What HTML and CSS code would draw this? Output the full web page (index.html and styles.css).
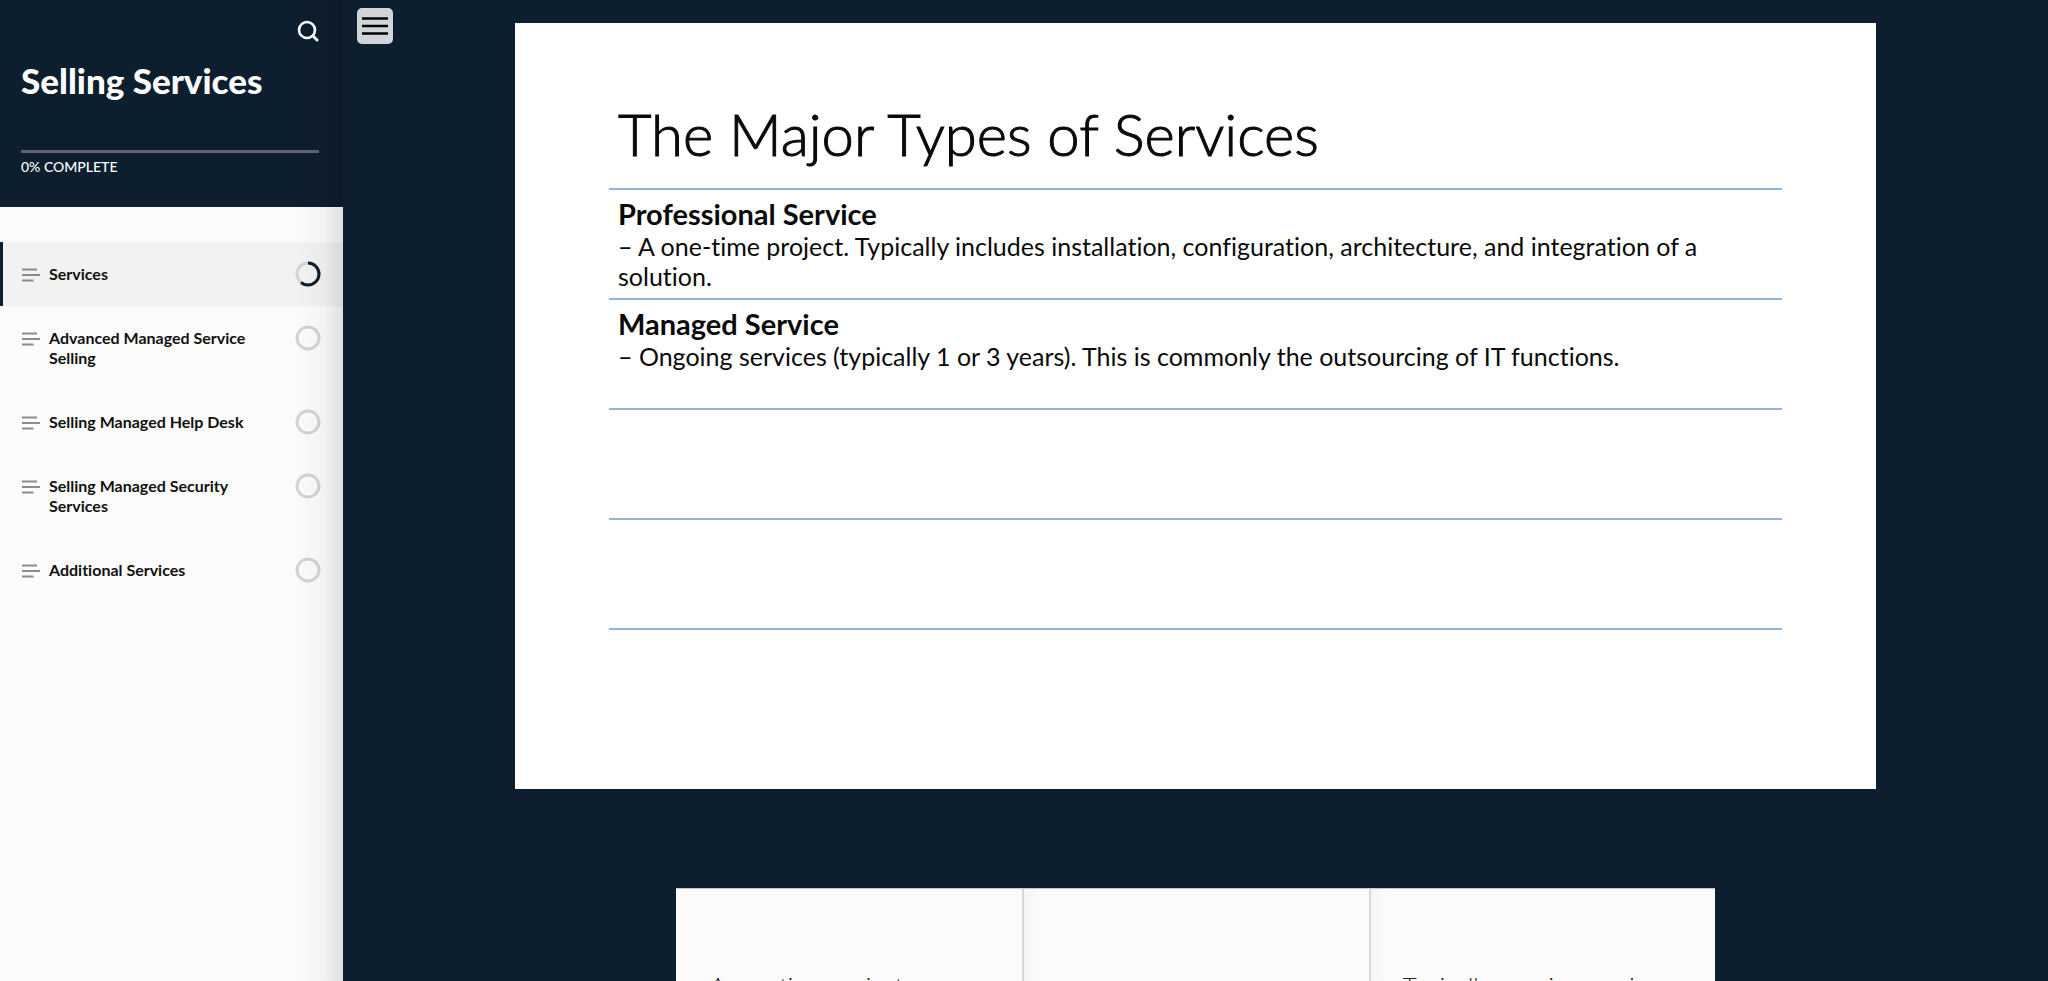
FILE: index.html
```html
<!DOCTYPE html>
<html lang="en">
<head>
    <meta charset="UTF-8">
    <meta name="viewport" content="width=device-width, initial-scale=1.0">
    <title>Selling Services</title>
    <link rel="stylesheet" href="styles.css">
</head>
<body>
    <aside class="sidebar">
        <header class="sidebar-header">
            <button class="search-btn" aria-label="Search">
                <svg width="22" height="22" viewBox="0 0 22 22" fill="none" stroke="#fff" stroke-width="3" stroke-linecap="round">
                    <circle cx="10" cy="10" r="8" stroke-width="2.6"/>
                    <path d="M16 16l4 4"/>
                </svg>
            </button>
            <h1>Selling Services</h1>
            <div class="progress-bar"></div>
            <div class="progress-text">0% COMPLETE</div>
        </header>

        <nav class="lessons">
            <a href="#" class="lesson active">
                <svg class="lines" viewBox="0 0 18 14"><path d="M0 1.5h15M0 7h18M0 12.500h11.500"/></svg>
                <span>Services</span>
                <svg class="ring" viewBox="0 0 26 26">
                    <circle cx="13" cy="13" r="11"/>
                    <circle class="ring-done" cx="13" cy="13" r="11" pathLength="100" stroke-dasharray="61 100" transform="rotate(-90 13 13)"/>
                </svg>
            </a>
            <a href="#" class="lesson">
                <svg class="lines" viewBox="0 0 18 14"><path d="M0 1.5h15M0 7h18M0 12.500h11.500"/></svg>
                <span>Advanced Managed Service Selling</span>
                <svg class="ring" viewBox="0 0 26 26"><circle cx="13" cy="13" r="11"/></svg>
            </a>
            <a href="#" class="lesson">
                <svg class="lines" viewBox="0 0 18 14"><path d="M0 1.5h15M0 7h18M0 12.500h11.500"/></svg>
                <span>Selling Managed Help Desk</span>
                <svg class="ring" viewBox="0 0 26 26"><circle cx="13" cy="13" r="11"/></svg>
            </a>
            <a href="#" class="lesson">
                <svg class="lines" viewBox="0 0 18 14"><path d="M0 1.5h15M0 7h18M0 12.500h11.500"/></svg>
                <span>Selling Managed Security Services</span>
                <svg class="ring" viewBox="0 0 26 26"><circle cx="13" cy="13" r="11"/></svg>
            </a>
            <a href="#" class="lesson">
                <svg class="lines" viewBox="0 0 18 14"><path d="M0 1.5h15M0 7h18M0 12.500h11.500"/></svg>
                <span>Additional Services</span>
                <svg class="ring" viewBox="0 0 26 26"><circle cx="13" cy="13" r="11"/></svg>
            </a>
        </nav>
    </aside>

    <main class="content">
        <button class="menu-btn" aria-label="Toggle menu">
            <svg width="26" height="20" viewBox="0 0 26 20" stroke="#000" stroke-width="2.6">
                <path d="M0 2.500h26M0 10h26M0 17.500h26"/>
            </svg>
        </button>

        <section class="slide">
            <h2>The Major Types of Services</h2>
            <div class="row">
                <h3>Professional Service</h3>
                <p>– A one-time project. Typically includes installation, configuration, architecture, and integration of a solution.</p>
            </div>
            <div class="row">
                <h3>Managed Service</h3>
                <p>– Ongoing services (typically 1 or 3 years). This is commonly the outsourcing of IT functions.</p>
            </div>
            <div class="row"></div>
            <div class="row"></div>
            <div class="row last"></div>
        </section>

        <section class="cards">
            <div class="card">A one-time project</div>
            <div class="card"></div>
            <div class="card">Typically ongoing services</div>
        </section>
    </main>
</body>
</html>
```
FILE: styles.css
```css
* {
    box-sizing: border-box;
}
body {
    margin: 0;
    height: 100vh;
    display: flex;
    overflow: hidden;
    background: #0d1e2f;
    font-family: Lato, sans-serif;
    font-variant-ligatures: none;
}
h1, h2, h3, p {
    margin: 0;
}
button {
    display: flex;
    align-items: center;
    justify-content: center;
    padding: 0;
    border: 0;
    cursor: pointer;
}

/* Sidebar */
.sidebar {
    position: relative;
    flex: 0 0 343px;
    background: #fbfbfb;
}
/* soft shade along the right edge */
.sidebar::after {
    content: "";
    position: absolute;
    top: 0;
    right: 0;
    bottom: 0;
    width: 48px;
    background: linear-gradient(to right, rgba(0, 0, 0, 0), rgba(0, 0, 0, 0.03) 60%, rgba(0, 0, 0, 0.11));
    pointer-events: none;
}
.sidebar-header {
    height: 207px;
    padding: 20px 24px 0 21px;
    background: #0d1e2f;
    color: #fff;
}
.search-btn {
    margin-left: auto;
    background: none;
}
h1 {
    margin-top: 14px;
    font-size: 35px;
    line-height: 48px;
    font-weight: 900;
}
.progress-bar {
    height: 3px;
    margin-top: 46px;
    background: #5d6570;
}
.progress-text {
    margin-top: 6px;
    font-size: 14px;
    line-height: 16px;
    font-weight: 500;
}
.lessons {
    padding-top: 35px;
}
.lesson {
    display: flex;
    align-items: flex-start;
    padding: 22px 22px 22px 19px;
    border-left: 3px solid transparent;
    color: #111;
    font-size: 16px;
    line-height: 20px;
    font-weight: 700;
    text-decoration: none;
}
.lesson.active {
    background: #f2f2f2;
    border-left-color: #0d1e2f;
}
.lesson span {
    flex: 1;
    padding: 0 40px 0 9px;
}
.lines {
    width: 18px;
    height: 14px;
    margin-top: 4px;
    fill: none;
    stroke: #888b8f;
    stroke-width: 2;
}
.ring {
    width: 26px;
    height: 26px;
    margin: -3px 0;
    fill: none;
    stroke: #d2d3d4;
    stroke-width: 3;
}
.ring-done {
    stroke: #0d1e2f;
}

/* Main area */
.content {
    position: relative;
    flex: 1;
    min-width: 0;
    padding-top: 23px;
}
.menu-btn {
    position: absolute;
    top: 8px;
    left: 14px;
    width: 36px;
    height: 36px;
    border-radius: 5px;
    background: #d2d5d8;
}
.slide {
    width: 80%;
    max-width: 1361px;
    aspect-ratio: 16 / 9;
    margin: 0 auto;
    padding: 71px 94px 0;
    background: #fff;
    color: #0a0a0a;
}
.slide h2 {
    padding-left: 9px;
    margin-bottom: 14px;
    font-size: 58px;
    line-height: 80px;
    font-weight: 300;
    -webkit-text-stroke: 1px #0a0a0a;
}
.row {
    height: 110px;
    padding: 7px 9px;
    border-top: 2px solid #8db4de;
}
.row.last {
    height: 2px;
    padding: 0;
}
.row h3 {
    font-size: 29px;
    line-height: 34px;
    font-weight: 700;
}
.row p {
    font-size: 25px;
    line-height: 30px;
}
.cards {
    display: grid;
    grid-template-columns: repeat(3, 1fr);
    width: 61%;
    max-width: 1039px;
    margin: 99px auto 0;
}
.card {
    height: 346px;
    padding: 79px 20px 0 34px;
    border-top: 1px solid #c4c6c8;
    background: #fbfbfb;
    color: #222;
    font-size: 24px;
    line-height: 36px;
    font-weight: 300;
}
.card + .card {
    padding-left: 32px;
    border-left: 2px solid #d6d7d8;
    background: linear-gradient(to right, #f4f5f5, #fbfbfb 16px);
}
```
